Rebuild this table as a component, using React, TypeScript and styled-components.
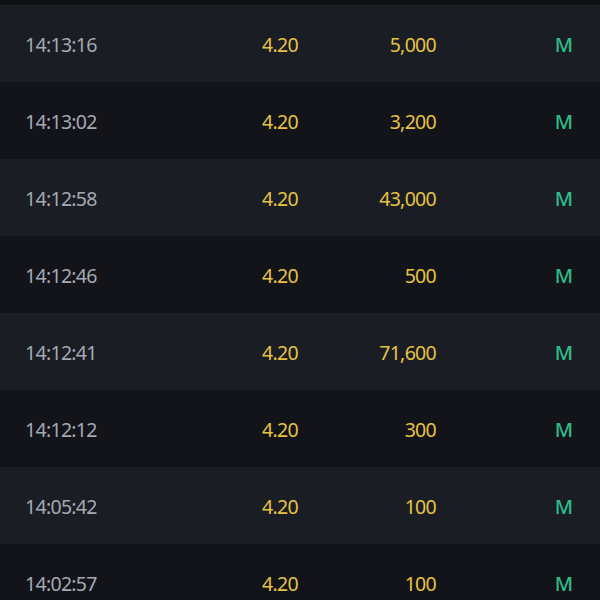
import React from "react";
import styled, { createGlobalStyle } from "styled-components";

const Global = createGlobalStyle`
  html, body { margin: 0; padding: 0; background: #0d0f13; }
  body { width: 600px; height: 600px; overflow: hidden; }
`;

const Page = styled.div`
  width: 600px;
  height: 600px;
  overflow: hidden;
  background: #0d0f13;
  padding-top: 5px;
  box-sizing: border-box;
  font-family: "Noto Sans", "Open Sans", sans-serif;
`;

const Row = styled.div<{ $alt: boolean }>`
  display: grid;
  grid-template-columns: 25px 130px 143px 138px 1fr 27px;
  align-items: center;
  box-sizing: border-box;
  height: 77px;
  padding-top: 2px;
  background: ${(p) => (p.$alt ? "#121419" : "#1a1d24")};
  font-size: 19.5px;
  letter-spacing: -0.7px;
`;

const Time = styled.span`
  grid-column: 2;
  color: #a4a9b3;
`;

const Num = styled.span<{ $col: number }>`
  grid-column: ${(p) => p.$col};
  text-align: right;
  color: #e6c342;
`;

const Side = styled.span`
  grid-column: 5;
  text-align: right;
  color: #2ebd88;
  font-weight: 500;
  font-size: 20px;
  letter-spacing: 0;
`;

const rows = [
  ["14:13:16", "4.20", "5,000"],
  ["14:13:02", "4.20", "3,200"],
  ["14:12:58", "4.20", "43,000"],
  ["14:12:46", "4.20", "500"],
  ["14:12:41", "4.20", "71,600"],
  ["14:12:12", "4.20", "300"],
  ["14:05:42", "4.20", "100"],
  ["14:02:57", "4.20", "100"],
];

export default function App() {
  return (
    <>
      <Global />
      <Page>
        {rows.map(([t, p, v], i) => (
          <Row key={i} $alt={i % 2 === 1}>
            <Time>{t}</Time>
            <Num $col={3}>{p}</Num>
            <Num $col={4}>{v}</Num>
            <Side>M</Side>
          </Row>
        ))}
      </Page>
    </>
  );
}
